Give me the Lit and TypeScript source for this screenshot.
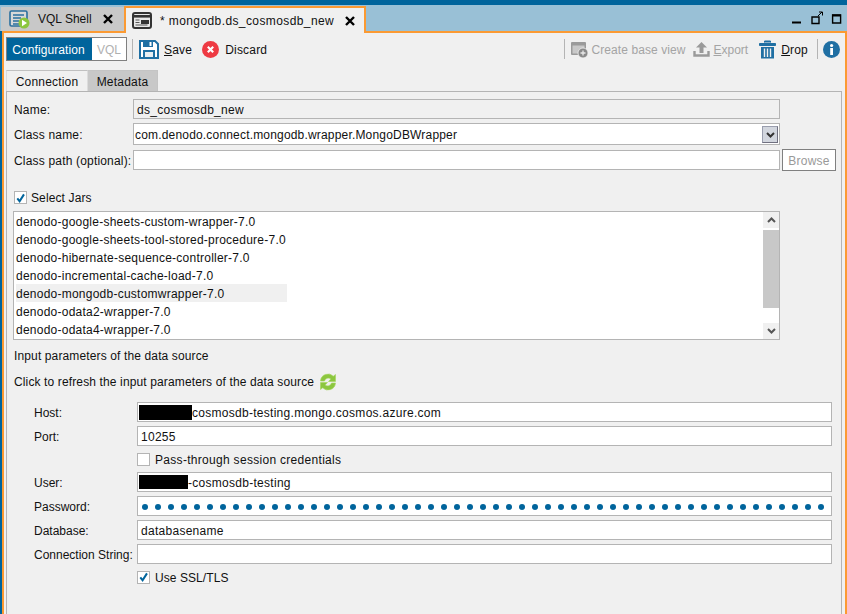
import { LitElement, html, css } from "lit";
import { customElement } from "lit/decorators.js";

const jars = [
  "denodo-google-sheets-custom-wrapper-7.0",
  "denodo-google-sheets-tool-stored-procedure-7.0",
  "denodo-hibernate-sequence-controller-7.0",
  "denodo-incremental-cache-load-7.0",
  "denodo-mongodb-customwrapper-7.0",
  "denodo-odata2-wrapper-7.0",
  "denodo-odata4-wrapper-7.0",
];

const closeX = html`<svg class="close" width="10" height="10" viewBox="0 0 10 10"><path d="M1 1 9 9M9 1 1 9" stroke="#000" stroke-width="2.4" fill="none"/></svg>`;

const check = html`<span class="cb"><svg width="12" height="12" viewBox="0 0 12 12"><path d="M2.5 6.5 5 9.5 9.8 2" stroke="#00649c" stroke-width="2.2" fill="none"/></svg></span>`;

const chevron = (up: boolean, color: string) => html`<svg width="9" height="6" viewBox="0 0 9 6"><path d="${up ? "M1 5 4.5 1.5 8 5" : "M1 1 4.5 4.5 8 1"}" stroke="${color}" stroke-width="2" fill="none"/></svg>`;

@customElement("app-root")
export class AppRoot extends LitElement {
  static styles = css`
    :host { display: block; width: 847px; height: 614px; overflow: hidden; font-family: "Liberation Sans", Arial, sans-serif; font-size: 12px; color: #111; }
    .root { display: flex; flex-direction: column; height: 614px; background: #00649c; }
    .topbar { height: 5px; flex: none; }
    .strip { height: 26px; flex: none; display: flex; align-items: flex-end; background: #99c0d6; }
    .tab { display: flex; align-items: center; box-sizing: border-box; flex: none; }
    .tab.vql { margin-left: 1px; width: 123px; height: 24px; background: #c8c8c8; padding-left: 8px; }
    .tab.vql span { margin-left: 8px; width: 65px; }
    .tab.active { position: relative; z-index: 1; width: 242px; height: 27px; margin-bottom: -2px; background: #f0f0f0; border: 2px solid #fb9a33; border-bottom: 0; padding-left: 6px; }
    .tab.active span { margin-left: 8px; width: 185px; letter-spacing: 0.4px; }
    .win { margin-left: auto; display: flex; align-items: center; height: 26px; padding-right: 5px; }
    .panel { flex: 1; min-height: 0; margin-left: 2px; background: #f0f0f0; border: solid #fb9a33; border-width: 2px 2px 0 2px; display: flex; flex-direction: column; padding: 4px 3px 0 2px; }
    .toolbar { display: flex; align-items: center; height: 24px; flex: none; }
    .seg { display: flex; box-sizing: border-box; width: 121px; height: 24px; border: 1px solid #808080; }
    .seg b { font-weight: 400; background: #00649c; color: #fff; width: 85px; display: flex; align-items: center; justify-content: center; padding: 1px 2px 0 0; box-sizing: border-box; letter-spacing: 0.1px; }
    .seg i { font-style: normal; background: #fff; color: #b0b0b0; flex: 1; display: flex; align-items: center; justify-content: center; padding-top: 1px; }
    .sep { width: 1px; height: 20px; background: #b4b4b4; flex: none; }
    .disabled { color: #a4a4a4; }
    .tool { flex: none; display: flex; align-items: center; }
    .tool span { padding-top: 1px; letter-spacing: 0.2px; }
    .tool span.cbv { letter-spacing: 0.08px; margin-left: 3px; }
    .tool span.exp { letter-spacing: 0; margin-left: 3px; }
    .right { margin-left: auto; display: flex; align-items: center; padding-right: 2px; }
    .tabs { display: flex; height: 21px; margin-top: 9px; flex: none; }
    .t { box-sizing: border-box; display: flex; align-items: center; justify-content: center; border: 1px solid #b4b4b4; border-bottom: 0; padding-top: 1px; letter-spacing: 0.2px; }
    .t.on { width: 82px; background: #f0f0f0; border-color: #dcdcdc; border-top-color: #c0c0c0; }
    .t.off { width: 70px; background: #c8c8c8; border-left: 0; border-color: #c4c4c4; }
    .body { flex: 1; min-height: 0; border: 1px solid #b4b4b4; border-bottom: 0; padding: 7px 0 0 7px; }
    .row { display: grid; grid-template-columns: 119px 647px auto; align-items: center; }
    .row > span { padding-top: 1px; letter-spacing: 0.18px; }
    .inp { box-sizing: border-box; height: 20px; border: 1px solid #b4b4b4; background: #fff; display: flex; align-items: center; padding: 1px 0 0 3px; white-space: nowrap; overflow: hidden; letter-spacing: 0.28px; }
    .inp.ro { background: #f0f0f0; }
    .combo { height: 22px; padding-left: 1px; justify-content: space-between; padding-right: 1px; letter-spacing: 0.18px; }
    .combobtn { box-sizing: border-box; width: 16px; height: 17px; background: #d2d6de; border: 1px solid #9a9eae; border-right-color: #707080; border-bottom-color: #707080; display: flex; align-items: center; justify-content: center; }
    .browse { box-sizing: border-box; margin-left: 2px; width: 54px; height: 22px; background: #fff; border: 1px solid #808080; color: #999; display: flex; align-items: center; justify-content: center; letter-spacing: 0.25px; padding-top: 1px; }
    .cbrow { display: flex; align-items: center; height: 13px; }
    .cb { box-sizing: border-box; width: 13px; height: 13px; flex: none; background: #fff; border: 1px solid #b4b4b4; display: flex; align-items: center; justify-content: center; }
    .cbrow .lbl { margin-left: 4px; padding-top: 1px; letter-spacing: 0.12px; }
    .list { box-sizing: border-box; display: flex; width: 767px; height: 129px; margin: 7px 0 0 -1px; border: 1px solid #b4b4b4; background: #fff; }
    .items { flex: 1; padding: 0 0 0 2px; }
    .item { height: 18px; width: 271px; line-height: 20px; white-space: nowrap; letter-spacing: 0.24px; }
    .item.sel { background: #f0f0f0; }
    .scroll { width: 16px; display: flex; flex-direction: column; flex: none; }
    .sb { height: 16px; background: #f0f0f0; display: flex; align-items: center; justify-content: center; flex: none; }
    .thumb { height: 78px; background: #c8c8c8; margin-top: 2px; flex: none; }
    .track { flex: 1; }
    .txt { height: 16px; line-height: 16px; display: flex; align-items: center; white-space: nowrap; letter-spacing: 0.13px; }
    .sub { margin: 12px 0 0 20px; display: grid; grid-template-columns: 103px 695px; row-gap: 4px; align-items: center; }
    .sub > span { padding-top: 1px; }
    .redact { background: #000; flex: none; margin: -1px 0 0 -2px; }
    .redact.host { width: 53px; height: 15px; }
    .redact.user { width: 49px; height: 14px; }
    .dots { display: flex; gap: 7px; padding-left: 1px; align-items: center; }
    .dot { width: 6px; height: 6px; flex: none; border-radius: 50%; background: #00649c; }
    .cell { grid-column: 2; height: 18px; }
    .cell .lbl { margin-left: 5px; letter-spacing: 0.3px; }
    .cell.ssl .lbl { letter-spacing: 0.07px; }
    u { text-underline-offset: 1px; }
  `;

  render() {
    return html`<div class="root">
      <div class="topbar"></div>
      <div class="strip">
        <div class="tab vql">
          <svg width="21" height="20" viewBox="0 0 21 20"><rect x="1" y="2" width="17" height="15" rx="1.5" fill="#d8d8d8" stroke="#2a6f9e" stroke-width="1.6"/><path d="M4 6h11M4 9h8M4 12h6M4 15h6" stroke="#2a6f9e" stroke-width="1.4"/><circle cx="15" cy="14" r="5.5" fill="#8cc63f"/><path d="M13 10.8v6.4l5-3.2z" fill="#fff"/></svg>
          <span>VQL Shell</span>${closeX}
        </div>
        <div class="tab active">
          <svg width="20" height="17" viewBox="0 0 20 17"><rect x="1" y="1" width="18" height="15" rx="2" fill="#e8e8e8" stroke="#333" stroke-width="2"/><path d="M1 3h18v2.6H1z" fill="#333"/><path d="M9 8h8v4H9z" fill="#333"/><path d="M3.5 8h4M3.5 10.5h4M3.5 13h12" stroke="#555" stroke-width="1"/></svg>
          <span>* mongodb.ds_cosmosdb_new</span>${closeX}
        </div>
        <div class="win">
          <svg width="50" height="14" viewBox="0 0 50 14"><path d="M0 11.5h9" stroke="#000" stroke-width="2"/><path d="M20 6h7v6.5h-7z" fill="none" stroke="#000" stroke-width="1.4"/><path d="M26 5 30 1M27 1h3.5v3.5" fill="none" stroke="#000" stroke-width="1"/><path d="M40.6 4h8v8h-8z" fill="none" stroke="#000" stroke-width="1.4"/><path d="M40 4.500h9" stroke="#000" stroke-width="2"/></svg>
        </div>
      </div>
      <div class="panel">
        <div class="toolbar">
          <div class="seg"><b>Configuration</b><i>VQL</i></div>
          <div class="sep" style="margin-left:5px"></div>
          <div class="tool" style="margin-left:6px">
            <svg width="20" height="19" viewBox="0 0 20 19"><path d="M1 1h15l3 3v14H1z" fill="#fff" stroke="#1f6fa3" stroke-width="2"/><path d="M4 1h10v6H4z" fill="#1f6fa3"/><path d="M10.500 2h2v4h-2z" fill="#fff"/><path d="M4 10h12v8H4z" fill="#1f6fa3"/><path d="M6 12h8v5H6z" fill="#e8eef2"/></svg>
            <span style="margin-left:5px"><u>S</u>ave</span>
          </div>
          <div class="tool" style="margin-left:10px">
            <svg width="17" height="17" viewBox="0 0 17 17"><circle cx="8.500" cy="8.500" r="8.500" fill="#ee3a43"/><path d="M5.800 5.800l5.400 5.400M11.200 5.800l-5.400 5.400" stroke="#fff" stroke-width="2.200"/></svg>
            <span style="margin-left:6px">Discard</span>
          </div>
          <div class="right">
            <div class="sep"></div>
            <div class="tool disabled" style="margin-left:6px">
              <svg width="17" height="17" viewBox="0 0 17 17"><rect x="0" y="1" width="15" height="13" rx="1" fill="#9a9a9a"/><rect x="1.500" y="4.500" width="12" height="8" fill="#c8c8c8"/><circle cx="12" cy="12" r="5" fill="#8a8a8a" stroke="#f0f0f0" stroke-width="0.800"/><path d="M9.500 12h5M12 9.500v5" stroke="#e8e8e8" stroke-width="1.300"/></svg>
              <span class="cbv">Create base view</span>
            </div>
            <div class="tool disabled" style="margin-left:8px">
              <svg width="17" height="17" viewBox="0 0 17 17"><path d="M8.500 1 14 6.500h-3.500v5.500h-4V6.500H3z" fill="#9a9a9a"/><path d="M1.500 10v4.500h14V10" fill="none" stroke="#9a9a9a" stroke-width="2.400"/></svg>
              <span class="exp"><u>E</u>xport</span>
            </div>
            <div class="tool" style="margin-left:11px">
              <svg width="17" height="19" viewBox="0 0 17 19"><path d="M5.500 2.500V1h6v1.500M0.500 3.500h16v2h-16z" fill="#1f6fa3" stroke="#1f6fa3"/><path d="M2 7h13v11.500H2z" fill="#1f6fa3"/><path d="M5.500 8.500v8.500M8.500 8.500v8.500M11.500 8.500v8.500" stroke="#f0f0f0" stroke-width="1.400"/></svg>
              <span style="margin-left:5px"><u>D</u>rop</span>
            </div>
            <div class="sep" style="margin-left:9px"></div>
            <div class="tool" style="margin-left:5px">
              <svg width="17" height="17" viewBox="0 0 17 17"><circle cx="8.500" cy="8.500" r="8.500" fill="#1f6fa3"/><rect x="7.200" y="7" width="2.800" height="7" fill="#fff"/><circle cx="8.600" cy="4.500" r="1.600" fill="#fff"/></svg>
            </div>
          </div>
        </div>
        <div class="tabs"><div class="t on">Connection</div><div class="t off">Metadata</div></div>
        <div class="body">
          <div class="row"><span>Name:</span><div class="inp ro">ds_cosmosdb_new</div></div>
          <div class="row" style="margin-top:4px"><span>Class name:</span><div class="inp combo"><span>com.denodo.connect.mongodb.wrapper.MongoDBWrapper</span><span class="combobtn">${chevron(false, "#333")}</span></div></div>
          <div class="row" style="margin-top:4px"><span>Class path (optional):</span><div class="inp"></div><div class="browse">Browse</div></div>
          <div class="cbrow" style="margin-top:20px">${check}<span class="lbl">Select Jars</span></div>
          <div class="list">
            <div class="items">
              ${jars.map((j, i) => html`<div class="item ${i === 4 ? "sel" : ""}">${j}</div>`)}
            </div>
            <div class="scroll">
              <div class="sb">${chevron(true, "#555")}</div>
              <div class="thumb"></div>
              <div class="track"></div>
              <div class="sb">${chevron(false, "#555")}</div>
            </div>
          </div>
          <div class="txt" style="margin-top:8px">Input parameters of the data source</div>
          <div class="txt" style="margin-top:10px">Click to refresh the input parameters of the data source
            <svg style="margin-left:5px" width="18" height="18" viewBox="0 0 18 18"><path d="M1.500 8a7.500 7.500 0 0 1 12.800-4.800L16.500 1.500V8.500h-7l2.300-2.500a4 4 0 0 0-6.300 2z" fill="#8cc63f" stroke="#a5d65e" stroke-width="0.600"/><path d="M16.500 10a7.500 7.500 0 0 1-12.800 4.800L1.500 16.500V9.500h7l-2.300 2.500a4 4 0 0 0 6.300-2z" fill="#8cc63f" stroke="#a5d65e" stroke-width="0.600"/></svg>
          </div>
          <div class="sub">
            <span>Host:</span><div class="inp"><span class="redact host"></span>cosmosdb-testing.mongo.cosmos.azure.com</div>
            <span>Port:</span><div class="inp">10255</div>
            <div class="cbrow cell"><span class="cb"></span><span class="lbl">Pass-through session credentials</span></div>
            <span>User:</span><div class="inp"><span class="redact user"></span>-cosmosdb-testing</div>
            <span>Password:</span><div class="inp"><div class="dots">${Array.from({ length: 53 }, () => html`<span class="dot"></span>`)}</div></div>
            <span>Database:</span><div class="inp">databasename</div>
            <span>Connection String:</span><div class="inp"></div>
            <div class="cbrow cell ssl">${check}<span class="lbl">Use SSL/TLS</span></div>
          </div>
        </div>
      </div>
    </div>`;
  }
}
